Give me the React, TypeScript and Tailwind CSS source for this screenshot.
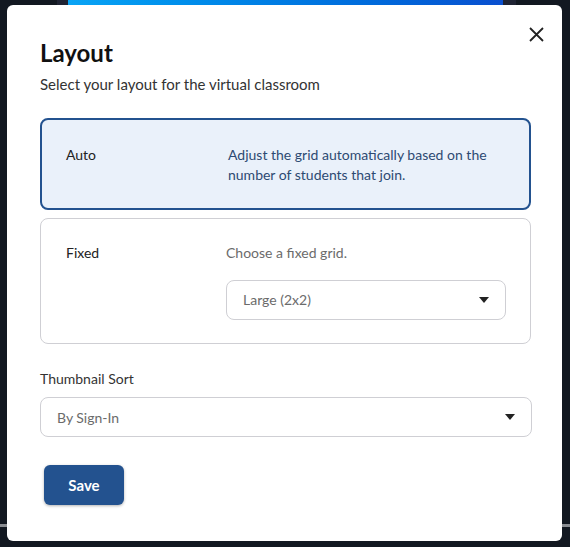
import { useState } from "react";

type Mode = "auto" | "fixed";

function Caret() {
  return (
    <svg width="10" height="6" viewBox="0 0 10 6" className="shrink-0">
      <path d="M0 0h10L5 6z" fill="#222" />
    </svg>
  );
}

function Select({ value, className }: { value: string; className?: string }) {
  return (
    <div
      className={`h-[40px] flex items-center justify-between rounded-lg border border-[#cfcfd4] bg-white pl-4 pr-[16px] text-[14px] text-[#6b6b6b] ${className ?? ""}`}
    >
      <span>{value}</span>
      <Caret />
    </div>
  );
}

export default function App() {
  const [mode, setMode] = useState<Mode>("auto");

  return (
    <div
      className="relative w-[570px] h-[547px] overflow-hidden bg-[#121821]"
      style={{ fontFamily: "Lato, 'Open Sans', sans-serif" }}
    >
      {/* backdrop bits peeking around the modal */}
      <div className="flex h-[6px]">
        <div className="w-[57px] bg-[#121821]" />
        <div className="w-[11px] bg-[#1f2333]" />
        <div className="w-[435px] bg-gradient-to-r from-[#0aa4f5] to-[#0a4fcf]" />
        <div className="w-[13px] bg-[#1f2333]" />
      </div>
      <div className="absolute left-0 right-0 top-[524px] h-[3px] bg-[#8a8d92]" />

      {/* MODAL */}
      <div className="absolute left-[7px] top-[5px] w-[555px] h-[536px] rounded-md bg-white pl-[33px] pr-[31px] pt-[33px]">
        <button className="absolute right-[14px] top-[18px] p-1 text-[#222]" title="Close">
          <svg width="15" height="15" viewBox="0 0 15 15">
            <path d="M1 1l13 13M14 1L1 14" stroke="#222" strokeWidth="1.8" />
          </svg>
        </button>

        <h1 className="text-[24px] leading-[30px] font-bold text-[#111]">Layout</h1>
        <p className="mt-[6px] text-[15px] leading-[20px] text-[#333]">
          Select your layout for the virtual classroom
        </p>

        {/* AUTO */}
        <div
          onClick={() => setMode("auto")}
          className={`mt-[24px] h-[92px] rounded-lg grid grid-cols-[162px_1fr] pl-[24px] pr-4 pt-[25px] text-[14px] leading-[20px] cursor-pointer ${
            mode === "auto"
              ? "border-2 border-[#23528f] bg-[#eaf1fa]"
              : "border border-[#cfcfd4] bg-white"
          }`}
        >
          <span className="text-[#222]">Auto</span>
          <span className="text-[#2d4a72]">
            Adjust the grid automatically based on the number of students that join.
          </span>
        </div>

        {/* FIXED */}
        <div
          onClick={() => setMode("fixed")}
          className={`mt-[8px] h-[126px] rounded-lg grid grid-cols-[160px_1fr] pl-[25px] pr-[24px] pt-[24px] text-[14px] leading-[20px] cursor-pointer ${
            mode === "fixed"
              ? "border-2 border-[#23528f] bg-[#eaf1fa]"
              : "border border-[#cfcfd4] bg-white"
          }`}
        >
          <span className="text-[#222]">Fixed</span>
          <div className="flex flex-col">
            <span className="text-[#6b6b6b]">Choose a fixed grid.</span>
            <Select value="Large (2x2)" className="mt-[17px]" />
          </div>
        </div>

        {/* THUMBNAIL SORT */}
        <div className="mt-[25px] text-[14px] leading-[20px] text-[#333]">Thumbnail Sort</div>
        <Select value="By Sign-In" className="mt-[8px] w-[492px]" />

        <button className="mt-[28px] ml-[4px] w-[80px] h-[40px] rounded-md bg-[#23528f] text-white text-[15px] font-bold shadow-[0_1px_3px_rgba(0,0,0,0.3)]">
          Save
        </button>
      </div>
    </div>
  );
}
